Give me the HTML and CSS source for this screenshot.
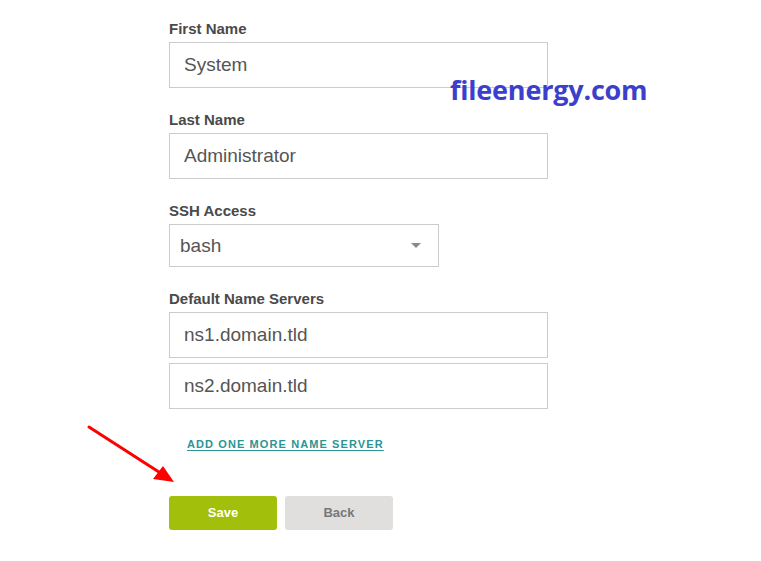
FILE: index.html
```html
<!DOCTYPE html>
<html lang="en">
<head>
    <meta charset="UTF-8">
    <title>User Settings</title>
    <link rel="stylesheet" href="styles.css">
</head>
<body>
    <form class="settings-form">
        <div class="field">
            <label for="first-name">First Name</label>
            <input id="first-name" class="text-input" type="text" value="System">
        </div>
        <div class="field">
            <label for="last-name">Last Name</label>
            <input id="last-name" class="text-input" type="text" value="Administrator">
        </div>
        <div class="field">
            <label for="ssh">SSH Access</label>
            <div class="select-box" id="ssh">
                <span>bash</span>
                <span class="caret"></span>
            </div>
        </div>
        <div class="field">
            <label>Default Name Servers</label>
            <input class="text-input" type="text" value="ns1.domain.tld">
            <input class="text-input stacked" type="text" value="ns2.domain.tld">
        </div>
        <a href="#" class="add-link">ADD ONE MORE NAME SERVER</a>
        <div class="actions">
            <button type="button" class="btn btn-save">Save</button>
            <button type="button" class="btn btn-back">Back</button>
        </div>
    </form>

    <!-- overlays -->
    <div class="watermark">fileenergy.com</div>
    <svg class="pointer" width="761" height="561" viewBox="0 0 761 561">
        <line x1="89" y1="427" x2="162" y2="474" stroke="#ff0000" stroke-width="3" stroke-linecap="round"/>
        <polygon points="174,482 153,479 163,466" fill="#ff0000"/>
    </svg>
</body>
</html>
```

FILE: styles.css
```css
body {
    margin: 0;
    padding: 0;
    font-family: "Liberation Sans", Arial, sans-serif;
    background: #fff;
    position: relative;
    min-height: 561px;
}
.settings-form {
    padding: 20px 0 0 169px;
    width: 379px;
}
.field {
    margin-bottom: 23px;
}
.field label {
    display: block;
    font-size: 15px;
    line-height: 18px;
    font-weight: bold;
    color: #4a4a4a;
    margin-bottom: 4px;
}
.text-input {
    display: block;
    box-sizing: border-box;
    width: 379px;
    height: 46px;
    margin: 0;
    padding: 0 14px 1px;
    border: 1px solid #cccccc;
    border-radius: 0;
    font-family: "Liberation Sans", Arial, sans-serif;
    font-size: 19px;
    color: #555;
    background: #fff;
    outline: none;
}
.text-input.stacked {
    margin-top: 5px;
}
.select-box {
    box-sizing: border-box;
    width: 270px;
    height: 43px;
    border: 1px solid #cccccc;
    padding: 0 17px 0 10px;
    display: flex;
    align-items: center;
    justify-content: space-between;
    font-size: 19px;
    color: #555;
}
.caret {
    width: 0;
    height: 0;
    border-left: 5px solid transparent;
    border-right: 5px solid transparent;
    border-top: 5px solid #8a8a8a;
}
.add-link {
    display: inline-block;
    margin: 6px 0 0 18px;
    font-size: 11px;
    line-height: 13px;
    font-weight: bold;
    letter-spacing: 1.1px;
    color: #2b9593;
    text-decoration: underline;
    text-underline-offset: 2px;
}
.actions {
    display: flex;
    gap: 8px;
    margin-top: 44px;
}
.btn {
    width: 108px;
    height: 34px;
    padding: 0 0 2px;
    border: none;
    border-radius: 3px;
    font-family: "Liberation Sans", Arial, sans-serif;
    font-size: 13px;
    font-weight: bold;
    cursor: pointer;
}
.btn-save {
    background-color: #a2bf0c;
    color: #fff;
}
.btn-back {
    background-color: #e0dfdd;
    color: #777;
}

/* overlays */
.watermark {
    position: absolute;
    left: 450px;
    top: 71px;
    font-family: "Open Sans", sans-serif;
    font-weight: bold;
    font-size: 27px;
    line-height: 38px;
    letter-spacing: -0.2px;
    color: #3b3fcb;
}
.pointer {
    position: absolute;
    left: 0;
    top: 0;
    pointer-events: none;
}
```
